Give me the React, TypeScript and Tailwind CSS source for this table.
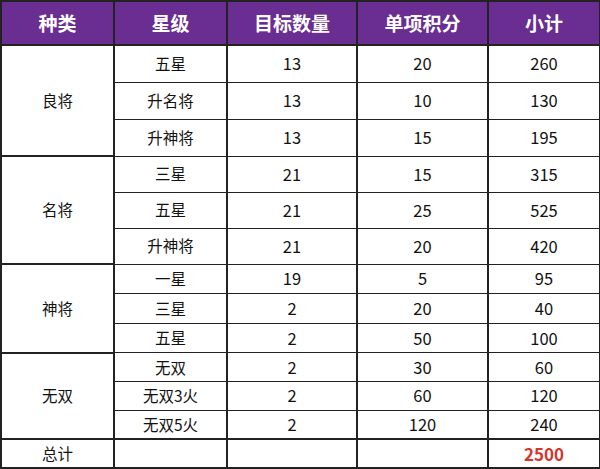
const groups = [
  {
    name: "良将",
    h: "h-[37px]",
    rows: [
      ["五星", "13", "20", "260"],
      ["升名将", "13", "10", "130"],
      ["升神将", "13", "15", "195"],
    ],
  },
  {
    name: "名将",
    h: "h-[36px]",
    rows: [
      ["三星", "21", "15", "315"],
      ["五星", "21", "25", "525"],
      ["升神将", "21", "20", "420"],
    ],
  },
  {
    name: "神将",
    h: "h-[29.6px]",
    rows: [
      ["一星", "19", "5", "95"],
      ["三星", "2", "20", "40"],
      ["五星", "2", "50", "100"],
    ],
  },
  {
    name: "无双",
    h: "h-[28.7px]",
    rows: [
      ["无双", "2", "30", "60"],
      ["无双3火", "2", "60", "120"],
      ["无双5火", "2", "120", "240"],
    ],
  },
];

const headers = ["种类", "星级", "目标数量", "单项积分", "小计"];
const cell = "border-2 border-[#222] text-center align-middle p-0";

export default function App() {
  return (
    <div className="w-[600px] h-[469px] bg-white overflow-hidden font-['Noto_Sans_CJK_SC','Microsoft_YaHei',sans-serif] text-[#111]">
      <table className="w-[599px] table-fixed border-collapse">
        <colgroup>
          <col className="w-[113px]" />
          <col className="w-[113px]" />
          <col className="w-[130px]" />
          <col className="w-[131px]" />
          <col className="w-[112px]" />
        </colgroup>
        <thead>
          <tr className="h-[44px] bg-[#6a2d92]">
            {headers.map((h) => (
              <th key={h} className={`${cell} text-[19px] font-bold text-white`}>
                {h}
              </th>
            ))}
          </tr>
        </thead>
        <tbody className="text-[15.5px]">
          {groups.map((g) =>
            g.rows.map((r, i) => (
              <tr key={g.name + i} className={g.h}>
                {i === 0 && (
                  <td rowSpan={3} className={cell}>
                    {g.name}
                  </td>
                )}
                {r.map((v, j) => (
                  <td
                    key={j}
                    className={`${cell} border-t-[1.5px] border-b-[1.5px] ${j > 0 ? "text-[16.5px]" : ""}`}
                  >
                    {v}
                  </td>
                ))}
              </tr>
            ))
          )}
          <tr className="h-[29px]">
            <td className={cell}>总计</td>
            <td className={cell}></td>
            <td className={cell}></td>
            <td className={cell}></td>
            <td className={`${cell} text-[17px] font-bold text-[#d8342b]`}>2500</td>
          </tr>
        </tbody>
      </table>
    </div>
  );
}
